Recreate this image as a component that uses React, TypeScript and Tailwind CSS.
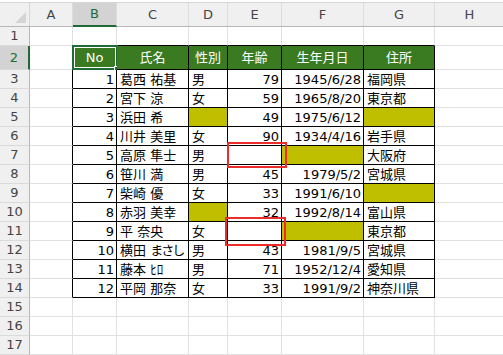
import React from 'react'

const COLS = ['A', 'B', 'C', 'D', 'E', 'F', 'G', 'H']
const colW = ['w-[43px]', 'w-[44px]', 'w-[72px]', 'w-[39px]', 'w-[54px]', 'w-[82px]', 'w-[71px]', 'w-[70px]']

// null = olive fill, '' = empty cell
type Person = { no: number; name: string; sex: string | null; age: string | null; birth: string | null; addr: string | null }

const people: Person[] = [
    { no: 1, name: '葛西 祐基', sex: '男', age: '79', birth: '1945/6/28', addr: '福岡県' },
    { no: 2, name: '宮下 涼', sex: '女', age: '59', birth: '1965/8/20', addr: '東京都' },
    { no: 3, name: '浜田 希', sex: null, age: '49', birth: '1975/6/12', addr: null },
    { no: 4, name: '川井 美里', sex: '女', age: '90', birth: '1934/4/16', addr: '岩手県' },
    { no: 5, name: '高原 隼士', sex: '男', age: '', birth: null, addr: '大阪府' },
    { no: 6, name: '笹川 満', sex: '男', age: '45', birth: '1979/5/2', addr: '宮城県' },
    { no: 7, name: '柴崎 優', sex: '女', age: '33', birth: '1991/6/10', addr: null },
    { no: 8, name: '赤羽 美幸', sex: null, age: '32', birth: '1992/8/14', addr: '富山県' },
    { no: 9, name: '平 奈央', sex: '女', age: '', birth: null, addr: '東京都' },
    { no: 10, name: '横田 まさし', sex: '男', age: '43', birth: '1981/9/5', addr: '宮城県' },
    { no: 11, name: '藤本 ﾋﾛ', sex: '男', age: '71', birth: '1952/12/4', addr: '愛知県' },
    { no: 12, name: '平岡 那奈', sex: '女', age: '33', birth: '1991/9/2', addr: '神奈川県' },
]

const headers = ['No', '氏名', '性別', '年齢', '生年月日', '住所']

type CellSpec = { text?: string; kind: 'plain' | 'head' | 'olive'; align?: 'left' | 'right' | 'center' }

function cellFor(row: number, col: number): CellSpec {
    // col: 0 = A ... 7 = H
    if (row === 2 && col >= 1 && col <= 6) return { text: headers[col - 1], kind: 'head', align: 'center' }
    const p = people[row - 3]
    if (!p || col < 1 || col > 6) return { kind: 'plain' }
    const values: (string | null)[] = [String(p.no), p.name, p.sex, p.age, p.birth, p.addr]
    const v = values[col - 1]
    if (v === null) return { kind: 'olive' }
    const right = col === 1 || col === 4 || col === 5
    return { text: v, kind: 'plain', align: right ? 'right' : 'left' }
}

// hiragana is set proportionally in the original font, so squeeze it a bit
function NameText({ text }: { text: string }) {
    const parts = text.split(' ')
    return (
        <>
            {parts.map((part, i) => (
                <React.Fragment key={i}>
                    {i > 0 && ' '}
                    <span className={/[\u3040-\u309f]/.test(part) ? 'tracking-[-2px]' : ''}>{part}</span>
                </React.Fragment>
            ))}
        </>
    )
}

function Cell({ row, col }: { row: number; col: number }) {
    const spec = cellFor(row, col)
    const blackR = row >= 2 && row <= 14 && col <= 6
    const blackB = row >= 1 && row <= 14 && col >= 1 && col <= 6
    const bg = spec.kind === 'head' ? 'bg-[#3a7b22] text-white' : spec.kind === 'olive' ? 'bg-[#bfbf00]' : 'bg-white text-black'
    const align = spec.align === 'right' ? 'justify-end pr-[2px]' : spec.align === 'center' ? 'justify-center' : 'justify-start pl-[3px]'
    return (
        <div
            className={`relative flex items-center shrink-0 h-full border-r border-b ${colW[col]} ${bg} ${align} ${blackR ? 'border-r-black' : 'border-r-[#e1e1e1]'} ${blackB ? 'border-b-black' : 'border-b-[#e1e1e1]'}`}
        >
            <span className="whitespace-nowrap leading-none">
                {col === 2 && row > 2 && spec.text ? <NameText text={spec.text} /> : spec.text}
            </span>
            {row === 2 && col === 1 && (
                <div className="absolute -left-[1px] -top-[1px] w-[46px] h-[25px] border-2 border-[#1e6b35]">
                    <div className="w-full h-full border border-white" />
                    <div className="absolute -right-[4px] -bottom-[4px] w-[6px] h-[6px] bg-[#1e6b35] border border-white" />
                </div>
            )}
            {row === 7 && col === 4 && (
                <div className="absolute -left-[1px] -top-[4px] w-[60px] h-[26px] border-2 border-[#ee2b2b] z-10" />
            )}
            {row === 11 && col === 4 && (
                <div className="absolute -left-[3px] -top-[5px] w-[61px] h-[29px] border-2 border-[#ee2b2b] z-10" />
            )}
        </div>
    )
}

export default function App() {
    const rows = Array.from({ length: 17 }, (_, i) => i + 1)
    return (
        <div
            className="w-[503px] h-[355px] overflow-hidden bg-white text-[13px]"
            style={{ fontFamily: '"DejaVu Sans", "Noto Sans CJK JP", sans-serif' }}
        >
            <div className="h-[2px] bg-white" />
            {/* Column headers */}
            <div className="flex h-[25px] bg-[#f0f0f0] border-t border-t-[#d6d6d6] border-b border-b-[#b7b7b7]">
                <div className="relative w-[30px] shrink-0 border-r border-r-[#d6d6d6]">
                    <svg className="absolute right-[3px] bottom-[3px]" width="11" height="11" viewBox="0 0 11 11">
                        <polygon points="11,0 11,11 0,11" fill="#d4d4d4" />
                    </svg>
                </div>
                {COLS.map((c, i) => (
                    <div
                        key={c}
                        className={`flex items-center justify-center shrink-0 border-r border-r-[#dcdcdc] ${colW[i]} ${c === 'B' ? 'bg-[#d3d3d3] text-[#1e6b35] border-b-2 border-b-[#1e6b35] -mb-[1px]' : 'text-[#444]'}`}
                    >
                        {c}
                    </div>
                ))}
            </div>
            {rows.map(r => (
                <div key={r} className={`flex ${r === 2 ? 'h-[24px]' : 'h-[19px]'}`}>
                    <div
                        className={`flex items-center justify-center w-[30px] shrink-0 border-b border-b-[#dadada] ${r === 2 ? 'bg-[#d3d3d3] text-[#1e6b35] border-r-2 border-r-[#1e6b35]' : 'bg-[#f0f0f0] text-[#444] border-r border-r-[#b7b7b7]'}`}
                    >
                        {r}
                    </div>
                    {COLS.map((_, c) => (
                        <Cell key={c} row={r} col={c} />
                    ))}
                </div>
            ))}
        </div>
    )
}
